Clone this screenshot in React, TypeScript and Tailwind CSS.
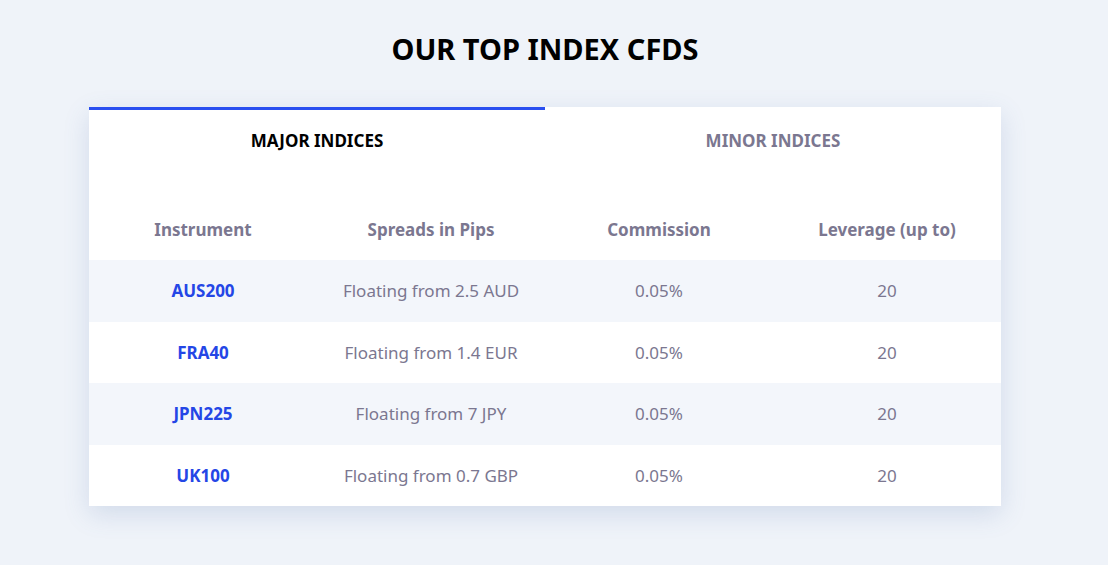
const rows = [
  ['AUS200', 'Floating from 2.5 AUD'],
  ['FRA40', 'Floating from 1.4 EUR'],
  ['JPN225', 'Floating from 7 JPY'],
  ['UK100', 'Floating from 0.7 GBP'],
]

export default function App() {
  return (
    <div className="min-h-[565px] bg-[#eff3f9] pt-[31px] font-['Lato',sans-serif]">
      <h2 className="ml-[89px] h-[36px] w-[912px] text-center text-[29px] font-bold leading-[36px] text-black">OUR TOP INDEX CFDS</h2>
      <div className="ml-[89px] mt-[40px] w-[912px] bg-white shadow-[0_8px_24px_rgba(80,110,170,0.18)]">
        <div className="flex h-[64px]">
          <div className="flex flex-1 justify-center border-t-[3px] border-[#2a4ff0] pt-[18px] text-[17px] font-bold text-black">
            MAJOR INDICES
          </div>
          <div className="flex flex-1 justify-center border-t-[3px] border-transparent pt-[18px] text-[17px] font-bold text-[#7b7790]">
            MINOR INDICES
          </div>
        </div>
        <div className="grid h-[89px] grid-cols-4 items-end pb-[18px] text-center text-[17px] font-bold text-[#7b7790]">
          <div>Instrument</div>
          <div>Spreads in Pips</div>
          <div>Commission</div>
          <div>Leverage (up to)</div>
        </div>
        {rows.map(([name, spread], i) => (
          <div
            key={name}
            className={`grid h-[61.5px] grid-cols-4 items-center text-center text-[17px] text-[#7b7790] ${i % 2 === 0 ? 'bg-[#f3f6fb]' : 'bg-white'}`}
          >
            <div className="font-bold text-[#2446e6]">{name}</div>
            <div>{spread}</div>
            <div>0.05%</div>
            <div>20</div>
          </div>
        ))}
      </div>
    </div>
  )
}
